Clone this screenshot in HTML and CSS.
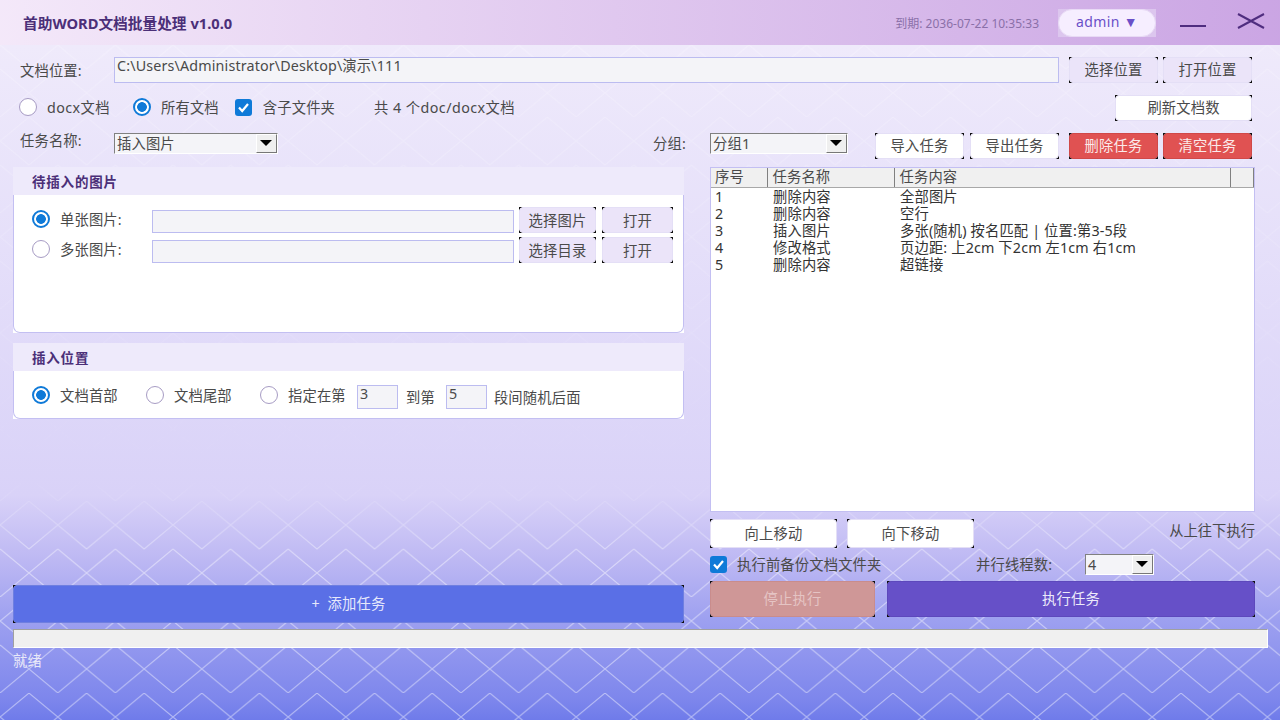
FILE: index.html
```html
<!DOCTYPE html>
<html lang="zh-CN">
<head>
    <meta charset="UTF-8">
    <title>首助WORD文档批量处理</title>
    <link rel="stylesheet" href="styles.css">
</head>
<body>
    <svg class="lattice" width="1280" height="720" aria-hidden="true">
        <defs>
            <pattern id="diamonds" width="57.6" height="96" y="21" x="0.2" patternUnits="userSpaceOnUse">
                <path d="M0 24 L28.8 0 L57.6 24 L28.8 48 Z M0 48 L57.6 96 M57.6 48 L0 96" fill="none" stroke="#fff" stroke-width="1"/>
            </pattern>
        </defs>
        <rect width="1280" height="720" fill="url(#diamonds)"/>
    </svg>

    <div class="app">
        <header class="titlebar">
            <div class="app-title">首助WORD文档批量处理 v1.0.0</div>
            <div class="expire">到期: 2036-07-22 10:35:33</div>
            <div class="user-wrap"><button class="user-btn">admin ▼</button></div>
            <span class="win-min"></span>
            <svg class="win-close" width="28" height="16" viewBox="0 0 28 16"><path d="M1 1 L27 15 M27 1 L1 15" stroke="#4f2d7f" stroke-width="2" fill="none"/></svg>
        </header>

        <main class="content">
            <div class="row path-row">
                <label class="row-label">文档位置:</label>
                <div class="field path-field">C:\Users\Administrator\Desktop\演示\111</div>
                <button class="btn btn-lilac w-88">选择位置</button>
                <button class="btn btn-lilac w-88">打开位置</button>
            </div>

            <div class="row filter-row">
                <span class="radio"></span><span class="opt first-opt">docx文档</span>
                <span class="radio checked"></span><span class="opt">所有文档</span>
                <span class="check"><svg width="17" height="17" viewBox="0 0 17 17"><path d="M4 8.5 L7.2 12 L13 5" stroke="#fff" stroke-width="2.2" fill="none"/></svg></span><span class="opt check-opt">含子文件夹</span>
                <span class="doc-count">共 4 个doc/docx文档</span>
                <button class="btn btn-white refresh">刷新文档数</button>
            </div>

            <div class="row task-row">
                <label class="row-label task-label">任务名称:</label>
                <div class="combo task-combo"><span>插入图片</span><i></i></div>
                <label class="group-label">分组:</label>
                <div class="combo group-combo"><span>分组1</span><i></i></div>
                <button class="btn btn-white w-88 first-task">导入任务</button>
                <button class="btn btn-white w-88">导出任务</button>
                <button class="btn btn-red w-88 first-red">删除任务</button>
                <button class="btn btn-red w-88">清空任务</button>
            </div>

            <div class="columns">
                <section class="left-col">
                    <div class="panel">
                        <h3>待插入的图片</h3>
                        <div class="panel-body images-body">
                            <div class="img-row">
                                <span class="radio checked"></span><span class="img-label">单张图片:</span>
                                <div class="field img-field"></div>
                                <button class="btn btn-lilac w-76">选择图片</button>
                                <button class="btn btn-lilac w-70">打开</button>
                            </div>
                            <div class="img-row">
                                <span class="radio"></span><span class="img-label">多张图片:</span>
                                <div class="field img-field"></div>
                                <button class="btn btn-lilac w-76">选择目录</button>
                                <button class="btn btn-lilac w-70">打开</button>
                            </div>
                        </div>
                    </div>

                    <div class="panel">
                        <h3>插入位置</h3>
                        <div class="panel-body place-body">
                            <span class="radio checked"></span><span class="place-opt">文档首部</span>
                            <span class="radio"></span><span class="place-opt">文档尾部</span>
                            <span class="radio"></span><span class="place-opt short">指定在第</span>
                            <div class="field num-field">3</div>
                            <span class="to-label">到第</span>
                            <div class="field num-field">5</div>
                            <span class="after-label">段间随机后面</span>
                        </div>
                    </div>

                    <button class="btn btn-blue add-task">+&nbsp;&nbsp;添加任务</button>
                </section>

                <section class="right-col">
                    <div class="table-box">
                        <table class="tasks">
                            <thead>
                                <tr><th class="c-no">序号</th><th class="c-name">任务名称</th><th class="c-text">任务内容</th><th class="c-end"></th></tr>
                            </thead>
                            <tbody>
                                <tr><td>1</td><td>删除内容</td><td colspan="2">全部图片</td></tr>
                                <tr><td>2</td><td>删除内容</td><td colspan="2">空行</td></tr>
                                <tr><td>3</td><td>插入图片</td><td colspan="2">多张(随机) 按名匹配 | 位置:第3-5段</td></tr>
                                <tr><td>4</td><td>修改格式</td><td colspan="2">页边距: 上2cm 下2cm 左1cm 右1cm</td></tr>
                                <tr><td>5</td><td>删除内容</td><td colspan="2">超链接</td></tr>
                            </tbody>
                        </table>
                    </div>

                    <div class="move-row">
                        <button class="btn btn-white w-126">向上移动</button>
                        <button class="btn btn-white w-126">向下移动</button>
                        <span class="order-note">从上往下执行</span>
                    </div>

                    <div class="backup-row">
                        <span class="check"><svg width="17" height="17" viewBox="0 0 17 17"><path d="M4 8.5 L7.2 12 L13 5" stroke="#fff" stroke-width="2.2" fill="none"/></svg></span>
                        <span class="backup-label">执行前备份文档文件夹</span>
                        <span class="thread-label">并行线程数:</span>
                        <div class="combo thread-combo"><span>4</span><i></i></div>
                    </div>

                    <div class="run-row">
                        <button class="btn btn-stop">停止执行</button>
                        <button class="btn btn-run">执行任务</button>
                    </div>
                </section>
            </div>

            <div class="progress"></div>
            <div class="status">就绪</div>
        </main>
    </div>
</body>
</html>
```

FILE: styles.css
```css
* {
    box-sizing: border-box;
}

html, body {
    margin: 0;
    height: 720px;
    overflow: hidden;
}

body {
    position: relative;
    font-family: "Noto Sans", "Noto Sans CJK SC", sans-serif;
    font-size: 14.3px;
    letter-spacing: 0.15px;
    color: #4a4a4a;
    background: linear-gradient(180deg, #efeafb 0, #efeafb 45px, #d9d2f8 495px, #bdb8f3 560px, #9da0f0 620px, #7d86ec 700px, #6f7bea 720px);
}

.lattice {
    position: absolute;
    left: 0;
    top: 0;
    opacity: 0.45;
    -webkit-mask-image: linear-gradient(180deg, rgba(0,0,0,0.5) 0, rgba(0,0,0,0.35) 200px, rgba(0,0,0,0.05) 420px, rgba(0,0,0,0) 480px, #000 560px);
    mask-image: linear-gradient(180deg, rgba(0,0,0,0.5) 0, rgba(0,0,0,0.35) 200px, rgba(0,0,0,0.05) 420px, rgba(0,0,0,0) 480px, #000 560px);
}

.app {
    position: relative;
    height: 720px;
    display: flex;
    flex-direction: column;
}

/* title bar */
.titlebar {
    height: 45px;
    display: flex;
    align-items: center;
    padding: 0 15px 0 23px;
    background: linear-gradient(90deg, rgba(244,232,249,0.93), rgba(200,160,226,0.93));
}

.app-title {
    font-size: 14.7px;
    font-weight: bold;
    letter-spacing: 0;
    color: #4b2f78;
    margin-right: auto;
}

.expire {
    font-size: 12px;
    letter-spacing: 0;
    color: #8a70a8;
    margin-right: 19px;
}

.user-wrap {
    width: 98px;
    height: 28px;
    background: #dcc6ee;
}

.user-btn {
    display: block;
    width: 98px;
    height: 28px;
    border: 1px solid #e8daf5;
    border-radius: 14px;
    background: #f6eeff;
    color: #6a50c8;
    font: 14px "Noto Sans", sans-serif;
    letter-spacing: 0.4px;
    padding: 0 0 2px;
}

.win-min {
    width: 26px;
    height: 2px;
    background: #4f2d7f;
    margin: 6px 31px 0 24px;
}

.win-close {
    margin-top: -3px;
}

/* content */
.content {
    flex: 1;
    padding: 12px 12px 0 13px;
    display: flex;
    flex-direction: column;
}

.row {
    display: flex;
    align-items: center;
}

.row-label {
    width: 101px;
    padding-left: 7px;
}

.path-row .row-label {
    margin-top: -2px;
}

.field {
    background: #f4f4f8;
    border: 1px solid #bcbcf0;
    padding-left: 2px;
    line-height: 16px;
}

.path-row {
    height: 26px;
}

.path-field {
    flex: 0 0 945px;
    height: 26px;
    margin-right: 10px;
}

.path-row .btn + .btn {
    margin-left: 5px;
}

.filter-row {
    height: 26px;
    margin-top: 12px;
}

.filter-row .radio,
.filter-row .check {
    margin-top: -2px;
}

.filter-row .opt,
.doc-count {
    margin-top: -4px;
}

.filter-row .radio:first-child {
    margin-left: 6px;
}

.opt {
    margin-left: 10px;
    margin-right: 16px;
}

.first-opt {
    width: 76px;
    margin-right: 10px;
    letter-spacing: 0.4px;
}

.check-opt {
    margin-left: 11px;
}

.doc-count {
    margin-left: 23px;
    letter-spacing: 0.45px;
}

.refresh {
    width: 137px;
    margin-left: auto;
    margin-right: 16px;
}

.task-row {
    height: 26px;
    margin-top: 12px;
}

.task-label {
    align-self: flex-start;
    line-height: 16px;
}

.combo {
    height: 21px;
    align-self: flex-start;
    display: flex;
    background: #f4f4f8;
    border: 1px solid;
    border-color: #808080 #fff #fff #808080;
    padding-left: 2px;
    line-height: 19px;
}

.combo span {
    flex: 1;
}

.combo i {
    width: 21px;
    background: #efefef;
    border: 1px solid;
    border-color: #fff #777 #777 #fff;
    position: relative;
}

.combo i::after {
    content: "";
    position: absolute;
    left: 3px;
    top: 5px;
    border: 6px solid transparent;
    border-top: 6px solid #000;
    border-bottom: 0;
}

.task-combo {
    width: 164px;
}

.group-label {
    margin-left: 375px;
    width: 57px;
    align-self: flex-start;
    line-height: 21px;
}

.group-combo {
    width: 138px;
}

.first-task {
    margin-left: 27px;
}

.task-row .btn {
    margin-right: 6px;
}

.task-row .first-red {
    margin-left: 4px;
    margin-right: 5px;
}

/* buttons with the black corner specks */
.btn {
    position: relative;
    height: 26px;
    border: 1px solid #e4dff6;
    border-radius: 4px;
    padding: 0 0 4px;
    font: inherit;
    letter-spacing: inherit;
    color: #4a4a4a;
    flex: none;
}

.btn::before {
    content: "";
    position: absolute;
    inset: -1px;
    background:
        radial-gradient(circle at 100% 100%, transparent 3.5px, #111 4.2px) 0 0 / 4px 4px no-repeat,
        radial-gradient(circle at 0 100%, transparent 3.5px, #111 4.2px) 100% 0 / 4px 4px no-repeat,
        radial-gradient(circle at 100% 0, transparent 3.5px, #111 4.2px) 0 100% / 4px 4px no-repeat,
        radial-gradient(circle at 0 0, transparent 3.5px, #111 4.2px) 100% 100% / 4px 4px no-repeat;
}

.btn-lilac {
    background: #ebe4f9;
}

.btn-white {
    background: #fff;
}

.btn-red {
    background: #e05252;
    border-color: #d04848;
    color: #fbeaea;
}

.btn-blue {
    background: #5a6fe6;
    border-color: #6f7fe0;
    color: #e6e8fb;
}

.btn-stop {
    background: #cf9797;
    border-color: #c98c8c;
    color: #e5c4c4;
    width: 165px;
    height: 36px;
}

.btn-run {
    background: #6650c8;
    border-color: #5d48bc;
    color: #ecebfa;
    flex: 1;
    height: 36px;
}

.w-88 {
    width: 89px;
}

.w-76 {
    width: 77px;
}

.w-70 {
    width: 71px;
}

.w-126 {
    width: 127px;
}

/* columns */
.columns {
    display: flex;
    margin-top: 8px;
    height: 456px;
}

.left-col {
    width: 671px;
    display: flex;
    flex-direction: column;
    gap: 10px;
}

.right-col {
    width: 545px;
    margin-left: 26px;
    display: flex;
    flex-direction: column;
}

.panel {
    background: #fff;
}

.panel h3 {
    margin: 0;
    height: 28px;
    padding-left: 19px;
    background: #eeeafb;
    font-size: 13.5px;
    font-weight: bold;
    line-height: 30px;
    letter-spacing: 0.8px;
    color: #4b2f78;
}

.panel-body {
    padding-left: 18px;
    border: 1px solid #c3bff2;
    border-top: 0;
    border-radius: 0 0 7px 7px;
}

.images-body {
    height: 138px;
    padding-top: 12px;
}

.img-row {
    display: flex;
    align-items: center;
    height: 26px;
    margin-bottom: 4px;
}

.img-row .radio {
    margin-top: -2px;
}

.img-label {
    width: 92px;
    margin-left: 10px;
    margin-top: -4px;
}

.img-field {
    width: 362px;
    height: 23px;
    margin-right: 5px;
    margin-top: 3px;
}

.img-row .btn {
    height: 26px;
    margin-right: 6px;
    padding-bottom: 2px;
}

.place-body {
    height: 48px;
    display: flex;
    align-items: center;
}

.place-opt {
    margin-left: 10px;
    width: 86px;
}

.place-opt.short {
    width: 69px;
}

.num-field {
    width: 41px;
    height: 24px;
    padding-left: 2px;
    margin-top: 4px;
}

.to-label {
    margin: 4px 11px 0 8px;
}

.after-label {
    margin: 4px 0 0 7px;
}

.add-task {
    height: 38px;
    margin-top: auto;
}

.table-box {
    height: 345px;
    background: #fff;
    border: 1px solid #c3bff2;
}

.tasks {
    width: 543px;
    border-collapse: collapse;
    table-layout: fixed;
}

.tasks th {
    height: 19px;
    padding: 0 0 0 4px;
    background: #f0f0f0;
    border-right: 1px solid #808080;
    border-bottom: 1px solid #a8a8a8;
    font-weight: normal;
    text-align: left;
    line-height: 18px;
}

.tasks th.c-name, .tasks th.c-text {
    padding-left: 5px;
}

.c-no {
    width: 56px;
}

.c-name {
    width: 127px;
}

.c-text {
    width: 336px;
}

.tasks td {
    height: 17px;
    padding: 0 0 0 4px;
    line-height: 17px;
    color: #333;
    white-space: nowrap;
}

.tasks td:nth-child(2), .tasks td:nth-child(3) {
    padding-left: 6px;
}

.move-row {
    display: flex;
    align-items: flex-start;
    gap: 10px;
    margin-top: 7px;
    height: 30px;
}

.move-row .btn {
    height: 29px;
    padding-bottom: 2px;
}

.order-note {
    margin-left: auto;
    letter-spacing: 0;
}

.backup-row {
    display: flex;
    align-items: center;
    height: 22px;
    margin-top: 4px;
}

.backup-label {
    margin-left: 10px;
    width: 239px;
    margin-top: -2px;
}

.thread-label {
    width: 109px;
    margin-top: -2px;
}

.thread-combo {
    width: 69px;
    align-self: auto;
}

.run-row {
    display: flex;
    gap: 12px;
    margin-top: 6px;
}

.radio {
    flex: none;
    width: 18px;
    height: 18px;
    border: 1.5px solid #a79cc4;
    border-radius: 50%;
    background: #fff;
}

.radio.checked {
    border: 2px solid #0f7ad8;
    background: radial-gradient(circle, #0f7ad8 0, #0f7ad8 4.5px, #fff 5.2px);
}

.check {
    flex: none;
    width: 17px;
    height: 17px;
    border-radius: 3px;
    background: #0f7ad8;
    display: block;
}

.check svg {
    display: block;
}

.progress {
    height: 19px;
    margin-top: 6px;
    background: #f0f0f0;
    border: 1px solid;
    border-color: #a0a0a0 #fff #fff #a0a0a0;
}

.status {
    margin-top: 1px;
    color: #e8e8f8;
}
```
